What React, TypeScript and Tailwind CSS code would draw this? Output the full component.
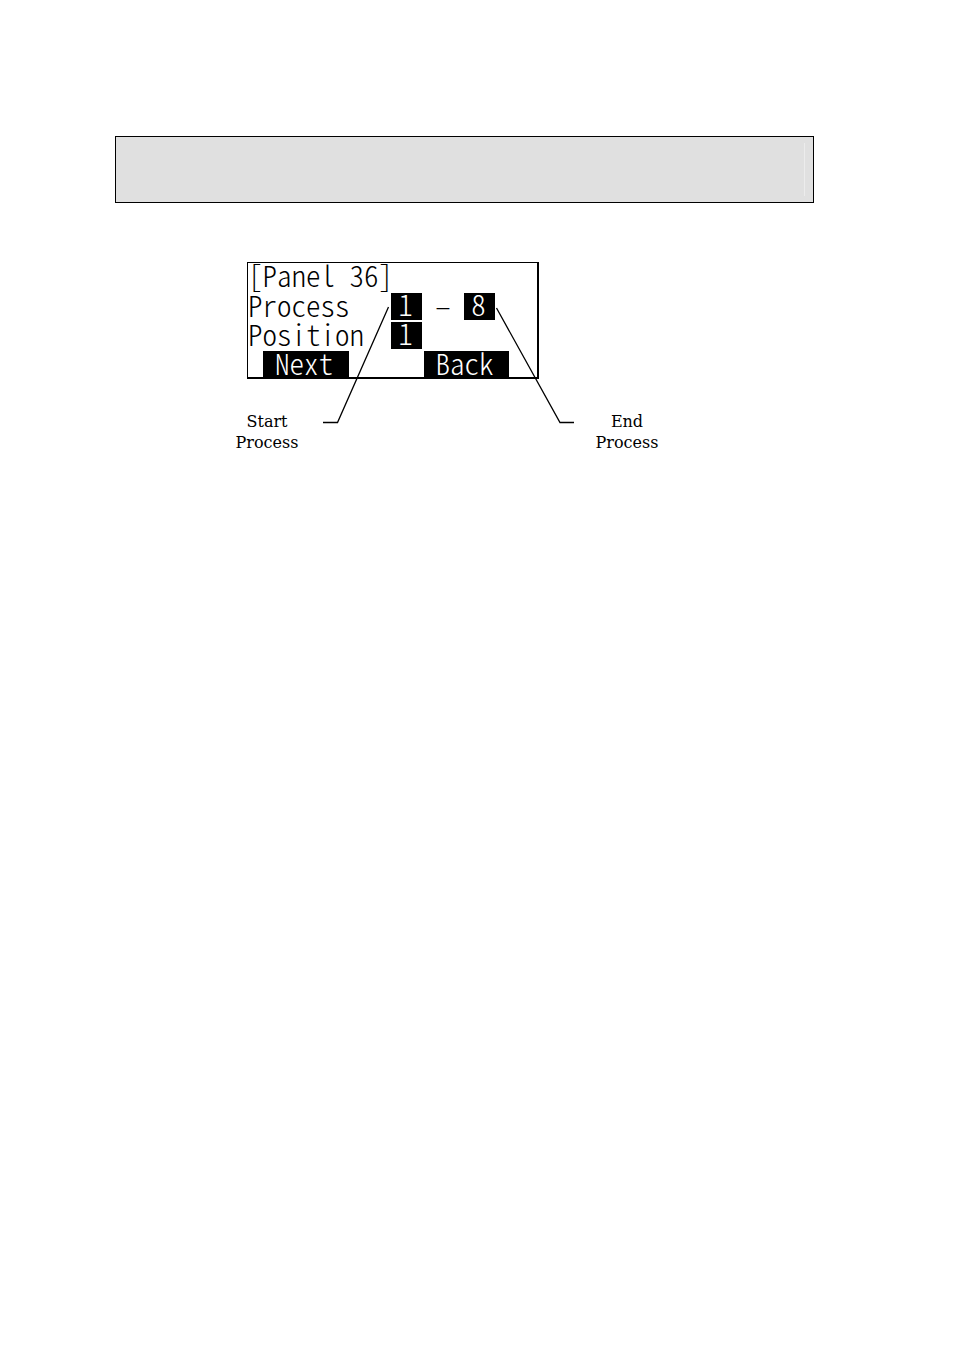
import React, { useState } from 'react';

interface FieldProps {
  label: string;
  value: string;
  onChange: (value: string) => void;
}

function Field({ label, value, onChange }: FieldProps) {
  return (
    <input
      type="text"
      aria-label={label}
      value={value}
      maxLength={1}
      onChange={(e) => onChange(e.target.value)}
      className="block h-[27px] w-[31px] bg-black pr-0.5 pb-2 text-center text-white outline-none"
    />
  );
}

export default function App() {
  const [start, setStart] = useState('1');
  const [end, setEnd] = useState('8');
  const [position, setPosition] = useState('1');

  return (
    <main className="min-h-screen bg-white pt-[136px] pr-[140px] pl-[115px] text-black">
      <header className="flex h-[67px] justify-end border border-black bg-[#e0e0e0] py-1.5 pr-2">
        <div className="w-px bg-[#ececec]"></div>
      </header>

      <figure className="relative mt-[59px] ml-[107px] w-[450px]">
        {/* Controller display */}
        <div className="ml-[25px] w-[292px] border-t border-r-2 border-b-2 border-l border-black font-['Noto_Sans_CJK_JP',sans-serif] text-[29px] leading-[23px] font-light whitespace-pre [font-feature-settings:'hwid']">
          <div className="h-[30px]">[Panel 36]</div>
          <div className="flex h-[29px]">
            <span className="w-[143px]">Process</span>
            <Field label="Start process" value={start} onChange={setStart} />
            <span className="w-[42px] text-center">–</span>
            <Field label="End process" value={end} onChange={setEnd} />
          </div>
          <div className="flex h-[29px]">
            <span className="w-[143px]">Position</span>
            <Field label="Position" value={position} onChange={setPosition} />
          </div>
          <div className="flex h-[26px] justify-between pr-7 pl-[15px]">
            <button type="button" className="w-[86px] bg-black pr-1 pb-1 text-white">Next</button>
            <button type="button" className="w-[85px] bg-black pr-1 pb-1 text-white">Back</button>
          </div>
        </div>

        {/* Callouts */}
        <figcaption className="mt-8 flex justify-between text-center font-['DejaVu_Serif',serif] text-[16px] leading-[21px]">
          <span className="w-[90px]">Start<br />Process</span>
          <span className="w-[90px]">End<br />Process</span>
        </figcaption>
        <svg className="pointer-events-none absolute top-0 left-0 h-[200px] w-[450px]" viewBox="0 0 450 200" fill="none" stroke="black" strokeWidth="1.3">
          <path d="M166.500 45 L115.500 160.500 H101" />
          <path d="M274.500 46 L338 160.500 H352" />
        </svg>
      </figure>
    </main>
  );
}
